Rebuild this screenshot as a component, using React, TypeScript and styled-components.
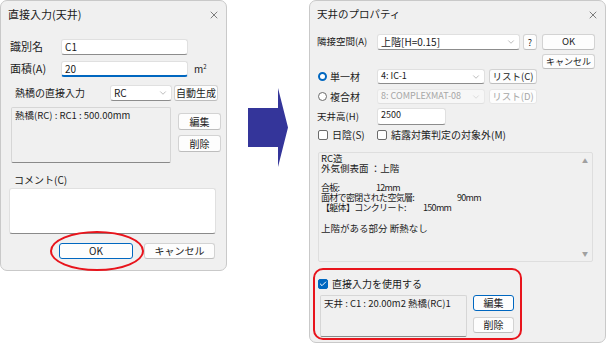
import React from "react";
import styled, { createGlobalStyle } from "styled-components";
import { ChevronDown, X, Check } from "lucide-react";

const GlobalStyle = createGlobalStyle`
  html, body {
    margin: 0;
    padding: 0;
    background: #fff;
  }
  body {
    width: 606px;
    height: 344px;
    overflow: hidden;
    font-family: "Noto Sans CJK JP", "Noto Sans", sans-serif;
    color: #1b1b1b;
  }
`;

const Page = styled.div`
  display: flex;
  align-items: flex-start;
  width: 606px;
  height: 344px;
`;

const Dialog = styled.div<{ $w: number; $h: number }>`
  position: relative;
  box-sizing: border-box;
  flex-shrink: 0;
  width: ${(p) => p.$w}px;
  height: ${(p) => p.$h}px;
  background: #f0f0f0;
  border: 1px solid #c9c9c9;
  border-radius: 7px;
  display: flex;
  flex-direction: column;
`;

const TitleBar = styled.div<{ $size: number }>`
  height: 27px;
  display: flex;
  align-items: center;
  justify-content: space-between;
  padding: 0 6px 0 7px;
  font-size: ${(p) => p.$size}px;
  line-height: 1;
  color: #1b1b1b;
`;

const Body = styled.div<{ $pad?: number }>`
  display: flex;
  flex-direction: column;
  padding-left: ${(p) => p.$pad ?? 0}px;
`;

const Row = styled.div<{ $top: number; $left?: number; $gap?: number; $align?: string }>`
  display: flex;
  align-items: ${(p) => p.$align ?? "center"};
  margin-top: ${(p) => p.$top}px;
  margin-left: ${(p) => p.$left ?? 0}px;
  gap: ${(p) => p.$gap ?? 0}px;
`;

const Label = styled.span<{ $w?: number; $size?: number; $left?: number }>`
  flex-shrink: 0;
  width: ${(p) => (p.$w ? `${p.$w}px` : "auto")};
  margin-left: ${(p) => p.$left ?? 0}px;
  font-size: ${(p) => p.$size ?? 10}px;
  line-height: 1.2;
  white-space: nowrap;
`;

const Field = styled.div<{ $w: number; $h?: number; $focus?: boolean; $disabled?: boolean; $size?: number; $top?: boolean }>`
  box-sizing: border-box;
  flex-shrink: 0;
  width: ${(p) => p.$w}px;
  height: ${(p) => p.$h ?? 16}px;
  display: flex;
  align-items: ${(p) => (p.$top ? "flex-start" : "center")};
  justify-content: space-between;
  padding: ${(p) => (p.$top ? "1px 3px 0" : "0 3px")};
  background: ${(p) => (p.$disabled ? "#f7f7f7" : "#fff")};
  border: 1px solid ${(p) => (p.$disabled ? "#e8e8e8" : "#e0e0e0")};
  border-bottom: ${(p) =>
    p.$focus ? "2px solid #0067c0" : p.$disabled ? "1px solid #e0e0e0" : "1px solid #8c8c8c"};
  border-radius: 3px;
  font-size: ${(p) => p.$size ?? 10}px;
  line-height: 1.2;
  white-space: nowrap;
  color: ${(p) => (p.$disabled ? "#a6a6a6" : "#1b1b1b")};
`;

const Button = styled.button<{ $w: number; $h?: number; $primary?: boolean; $disabled?: boolean; $size?: number; $left?: number }>`
  box-sizing: border-box;
  flex-shrink: 0;
  width: ${(p) => p.$w}px;
  height: ${(p) => p.$h ?? 16}px;
  margin: 0 0 0 ${(p) => p.$left ?? 0}px;
  padding: 0;
  display: flex;
  align-items: center;
  justify-content: center;
  background: #fdfdfd;
  border: 1px solid ${(p) => (p.$primary ? "#0067c0" : p.$disabled ? "#e6e6e6" : "#d3d3d3")};
  border-bottom-color: ${(p) => (p.$primary ? "#0067c0" : p.$disabled ? "#e6e6e6" : "#bdbdbd")};
  border-radius: 3px;
  font-family: inherit;
  font-size: ${(p) => p.$size ?? 10}px;
  line-height: 1;
  white-space: nowrap;
  color: ${(p) => (p.$disabled ? "#a6a6a6" : "#1b1b1b")};
`;

const ButtonColumn = styled.div<{ $top: number; $left: number; $gap: number }>`
  display: flex;
  flex-direction: column;
  gap: ${(p) => p.$gap}px;
  margin-top: ${(p) => p.$top}px;
  margin-left: ${(p) => p.$left}px;
`;

const ListBox = styled.div<{ $w: number; $h: number; $size?: number }>`
  box-sizing: border-box;
  flex-shrink: 0;
  width: ${(p) => p.$w}px;
  height: ${(p) => p.$h}px;
  padding: 2px 3px;
  background: #f0f0f0;
  border: 1px solid #d6d6d6;
  border-bottom-color: #8a8a8a;
  border-radius: 2px;
  font-size: ${(p) => p.$size ?? 10}px;
  line-height: 1.2;
  white-space: nowrap;
`;

const Memo = styled.div<{ $top: number; $left: number; $w: number; $h: number }>`
  box-sizing: border-box;
  width: ${(p) => p.$w}px;
  height: ${(p) => p.$h}px;
  margin-top: ${(p) => p.$top}px;
  margin-left: ${(p) => p.$left}px;
  background: #fff;
  border: 1px solid #e0e0e0;
  border-bottom-color: #8a8a8a;
  border-radius: 3px;
`;

const Unit = styled.span`
  margin-left: 6px;
  font-size: 10px;
  line-height: 1;
`;

const Sup = styled.span`
  font-size: 6px;
  vertical-align: 4px;
`;

const Chevron = styled(ChevronDown)`
  flex-shrink: 0;
  color: #7a7a7a;
`;

const Ellipse = styled.div`
  position: absolute;
  left: 49px;
  top: 230px;
  width: 94px;
  height: 40px;
  box-sizing: border-box;
  border: 2.5px solid #e8141c;
  border-radius: 50%;
  pointer-events: none;
`;

const Highlight = styled.div`
  position: absolute;
  left: 3px;
  top: 267px;
  width: 209px;
  height: 72px;
  box-sizing: border-box;
  border: 2px solid #e8141c;
  border-radius: 10px;
  pointer-events: none;
`;

const ArrowArea = styled.div`
  flex-shrink: 0;
  width: 82px;
  padding: 88px 0 0 21px;
  box-sizing: border-box;
`;

const TopSection = styled.div`
  display: flex;
  align-items: flex-start;
  margin-top: 6px;
`;

const Column = styled.div`
  display: flex;
  flex-direction: column;
`;

const Radio = styled.span<{ $checked?: boolean }>`
  box-sizing: border-box;
  width: 9px;
  height: 9px;
  margin: 0 3px 0 1px;
  border-radius: 50%;
  background: #fff;
  border: ${(p) => (p.$checked ? "2.5px solid #0067c0" : "1px solid #6b6b6b")};
`;

const Choice = styled.span<{ $w?: number }>`
  display: flex;
  align-items: center;
  flex-shrink: 0;
  width: ${(p) => (p.$w ? `${p.$w}px` : "auto")};
  font-size: 10px;
  line-height: 1.2;
  white-space: nowrap;
`;

const CheckBox = styled.span<{ $checked?: boolean }>`
  box-sizing: border-box;
  width: 10px;
  height: 10px;
  margin: 0 4px 0 1px;
  display: flex;
  align-items: center;
  justify-content: center;
  border-radius: 2px;
  background: ${(p) => (p.$checked ? "#0067c0" : "#fff")};
  border: 1px solid ${(p) => (p.$checked ? "#0067c0" : "#6b6b6b")};
  color: #fff;
`;

const InfoBox = styled.div`
  box-sizing: border-box;
  display: flex;
  width: 275px;
  height: 110px;
  margin: 11px 0 0 1px;
  background: #f0f0f0;
  border: 1px solid #dedede;
  border-radius: 2px;
`;

const InfoText = styled.div`
  flex: 1;
  padding-left: 2px;
  font-size: 9.5px;
  line-height: 10px;
  white-space: pre;
`;

const SpecLine = styled.div`
  display: flex;
  font-size: 9px;
  letter-spacing: -0.7px;
`;

const SpecLabel = styled.span<{ $w: number }>`
  width: ${(p) => p.$w}px;
  flex-shrink: 0;
`;

const ScrollBar = styled.div`
  width: 14px;
  display: flex;
  flex-direction: column;
  justify-content: space-between;
  align-items: center;
  padding: 5px 0 4px;
  color: #a0a0a0;
  font-size: 6px;
  line-height: 1;
`;

const LeftDialog = () => (
  <Dialog $w={227} $h={271}>
    <TitleBar $size={11}>
      <span>直接入力(天井)</span>
      <X size={12} strokeWidth={1.1} />
    </TitleBar>
    <Body>
      <Row $top={11} $left={9}>
        <Label $w={51} $size={11}>識別名</Label>
        <Field $w={127}>C1</Field>
      </Row>
      <Row $top={6} $left={9}>
        <Label $w={51} $size={11}>面積(A)</Label>
        <Field $w={127} $focus>20</Field>
        <Unit>
          m<Sup>2</Sup>
        </Unit>
      </Row>
      <Row $top={8} $left={14}>
        <Label $w={95}>熱橋の直接入力</Label>
        <Field $w={62}>
          RC
          <Chevron size={10} strokeWidth={1.2} />
        </Field>
        <Button $w={44} $left={2}>自動生成</Button>
      </Row>
      <Row $top={6} $left={10} $align="flex-start">
        <ListBox $w={160} $h={56} $size={9.5}>熱橋(RC) : RC1 : 500.00mm</ListBox>
        <ButtonColumn $top={6} $left={7} $gap={5}>
          <Button $w={43} $h={17}>編集</Button>
          <Button $w={43} $h={17}>削除</Button>
        </ButtonColumn>
      </Row>
      <Row $top={11} $left={13}>
        <Label>コメント(C)</Label>
      </Row>
      <Memo $top={2} $left={8} $w={207} $h={46} />
      <Row $top={9} $left={58} $gap={11}>
        <Button $w={74} $primary>OK</Button>
        <Button $w={71}>キャンセル</Button>
      </Row>
    </Body>
    <Ellipse />
  </Dialog>
);

const Arrow = () => (
  <ArrowArea>
    <svg width="41" height="79" viewBox="0 0 41 79">
      <polygon points="0,20 30,20 30,0 40,39.5 30,79 30,59 0,59" fill="#34359a" />
    </svg>
  </ArrowArea>
);

const RightDialog = () => (
  <Dialog $w={297} $h={343}>
    <TitleBar $size={10.5}>
      <span>天井のプロパティ</span>
      <X size={12} strokeWidth={1.1} />
    </TitleBar>
    <Body $pad={7}>
      <TopSection>
        <Column>
          <Row $top={0} $gap={0}>
            <Label $w={60} $size={9.5}>隣接空間(A)</Label>
            <Field $w={143} $size={10}>
              上階[H=0.15]
              <Chevron size={10} strokeWidth={1.2} />
            </Field>
            <Button $w={14} $left={3} $size={9}>?</Button>
          </Row>
          <Row $top={19}>
            <Choice $w={60}>
              <Radio $checked />
              単一材
            </Choice>
            <Field $w={108} $h={15} $size={9}>
              4: IC-1
              <Chevron size={10} strokeWidth={1.2} />
            </Field>
            <Button $w={48} $h={15} $left={4} $size={9.5}>リスト(C)</Button>
          </Row>
          <Row $top={5}>
            <Choice $w={60}>
              <Radio />
              複合材
            </Choice>
            <Field $w={108} $h={15} $size={9} $disabled>
              8: COMPLEXMAT-08
              <Chevron size={10} strokeWidth={1.2} color="#c0c0c0" />
            </Field>
            <Button $w={48} $h={15} $left={4} $size={9.5} $disabled>リスト(D)</Button>
          </Row>
          <Row $top={4}>
            <Label $w={60} $size={9.5}>天井高(H)</Label>
            <Field $w={69} $h={17} $size={9} $top>2500</Field>
          </Row>
        </Column>
        <ButtonColumn $top={0} $left={5} $gap={4}>
          <Button $w={53} $size={9.5}>OK</Button>
          <Button $w={53} $h={15} $size={9}>キャンセル</Button>
        </ButtonColumn>
      </TopSection>
      <Row $top={4}>
        <Choice $w={59}>
          <CheckBox />
          日陰(S)
        </Choice>
        <Choice>
          <CheckBox />
          結露対策判定の対象外(M)
        </Choice>
      </Row>
      <InfoBox>
        <InfoText>
          <div>RC造</div>
          <div>外気側表面 ：上階</div>
          <div> </div>
          <SpecLine>
            <SpecLabel $w={55}>合板:</SpecLabel>12mm
          </SpecLine>
          <SpecLine>
            <SpecLabel $w={136}>面材で密閉された空気層:</SpecLabel>90mm
          </SpecLine>
          <SpecLine>
            <SpecLabel $w={102}>【躯体】コンクリート:</SpecLabel>150mm
          </SpecLine>
          <div> </div>
          <div>上階がある部分 断熱なし</div>
        </InfoText>
        <ScrollBar>
          <span>▲</span>
          <span>▼</span>
        </ScrollBar>
      </InfoBox>
      <Row $top={16}>
        <Choice>
          <CheckBox $checked>
            <Check size={8} strokeWidth={3} />
          </CheckBox>
          直接入力を使用する
        </Choice>
      </Row>
      <Row $top={5} $left={3} $align="flex-start">
        <ListBox $w={147} $h={42} $size={9.5}>天井 : C1 : 20.00m2 熱橋(RC)1</ListBox>
        <ButtonColumn $top={0} $left={6} $gap={6}>
          <Button $w={41} $primary>編集</Button>
          <Button $w={41}>削除</Button>
        </ButtonColumn>
      </Row>
    </Body>
    <Highlight />
  </Dialog>
);

export default function App() {
  return (
    <>
      <GlobalStyle />
      <Page>
        <LeftDialog />
        <Arrow />
        <RightDialog />
      </Page>
    </>
  );
}
